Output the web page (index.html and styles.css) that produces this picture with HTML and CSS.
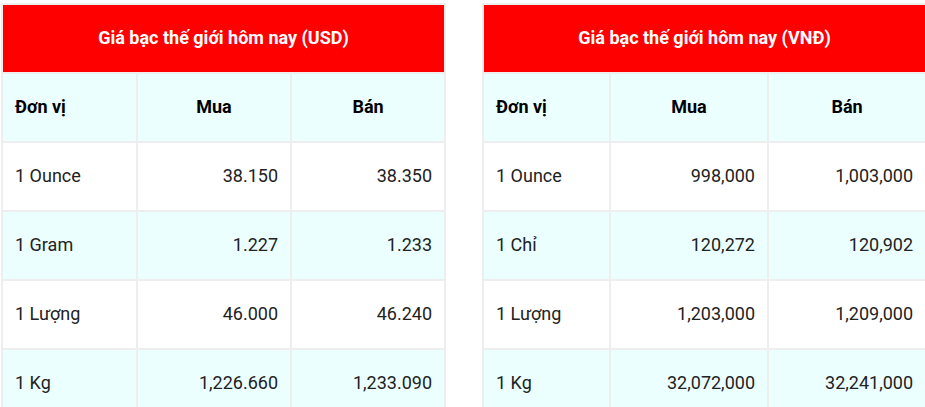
FILE: index.html
```html
<!DOCTYPE html>
<html lang="vi">
<head>
<meta charset="utf-8">
<title>Giá bạc thế giới</title>
<link rel="stylesheet" href="styles.css">
</head>
<body>
<div class="wrap">
  <table class="price">
    <colgroup><col class="c1a"><col class="c2a"><col class="c3a"></colgroup>
    <thead>
      <tr><th colspan="3" class="title">Giá bạc thế giới hôm nay (USD)</th></tr>
      <tr class="alt"><th class="left">Đơn vị</th><th>Mua</th><th>Bán</th></tr>
    </thead>
    <tbody>
      <tr><td>1 Ounce</td><td class="num">38.150</td><td class="num">38.350</td></tr>
      <tr class="alt"><td>1 Gram</td><td class="num">1.227</td><td class="num">1.233</td></tr>
      <tr><td>1 Lượng</td><td class="num">46.000</td><td class="num">46.240</td></tr>
      <tr class="alt"><td>1 Kg</td><td class="num">1,226.660</td><td class="num">1,233.090</td></tr>
    </tbody>
  </table>
  <table class="price">
    <colgroup><col class="c1b"><col class="c2b"><col class="c3b"></colgroup>
    <thead>
      <tr><th colspan="3" class="title">Giá bạc thế giới hôm nay (VNĐ)</th></tr>
      <tr class="alt"><th class="left">Đơn vị</th><th>Mua</th><th>Bán</th></tr>
    </thead>
    <tbody>
      <tr><td>1 Ounce</td><td class="num">998,000</td><td class="num">1,003,000</td></tr>
      <tr class="alt"><td>1 Chỉ</td><td class="num">120,272</td><td class="num">120,902</td></tr>
      <tr><td>1 Lượng</td><td class="num">1,203,000</td><td class="num">1,209,000</td></tr>
      <tr class="alt"><td>1 Kg</td><td class="num">32,072,000</td><td class="num">32,241,000</td></tr>
    </tbody>
  </table>
</div>
</body>
</html>
```
FILE: styles.css
```css
html, body {
  margin: 0;
  padding: 0;
  overflow: hidden;
  background: #ffffff;
}
body {
  font-family: Roboto, "Liberation Sans", Arial, sans-serif;
  color: #222222;
}
.wrap {
  display: flex;
  gap: 36px;
  padding: 3px 0 0 1px;
  width: 925px;
  height: 407px;
  box-sizing: border-box;
  overflow: hidden;
}
.price {
  flex: none;
  width: 445px;
  table-layout: fixed;
  border-collapse: separate;
  border-spacing: 2px;
  background: #eeeeee;
  font-size: 18px;
}
.c1a { width: 133px; }
.c2a { width: 152px; }
.c3a { width: 152px; }
.c1b { width: 125px; }
.c2b { width: 156px; }
.c3b { width: 156px; }
.price th,
.price td {
  height: 67px;
  padding: 0 12px 2px;
  vertical-align: middle;
  background: #ffffff;
  box-sizing: border-box;
}
.price tr.alt th,
.price tr.alt td {
  background: #ebffff;
}
.price th {
  font-weight: 700;
  color: #000000;
  text-align: center;
}
.price th.left {
  text-align: left;
}
.price th.title {
  background: #ff0000;
  color: #ffffff;
  font-size: 18px;
}
.price td {
  text-align: left;
}
.price td.num {
  text-align: right;
}
```
